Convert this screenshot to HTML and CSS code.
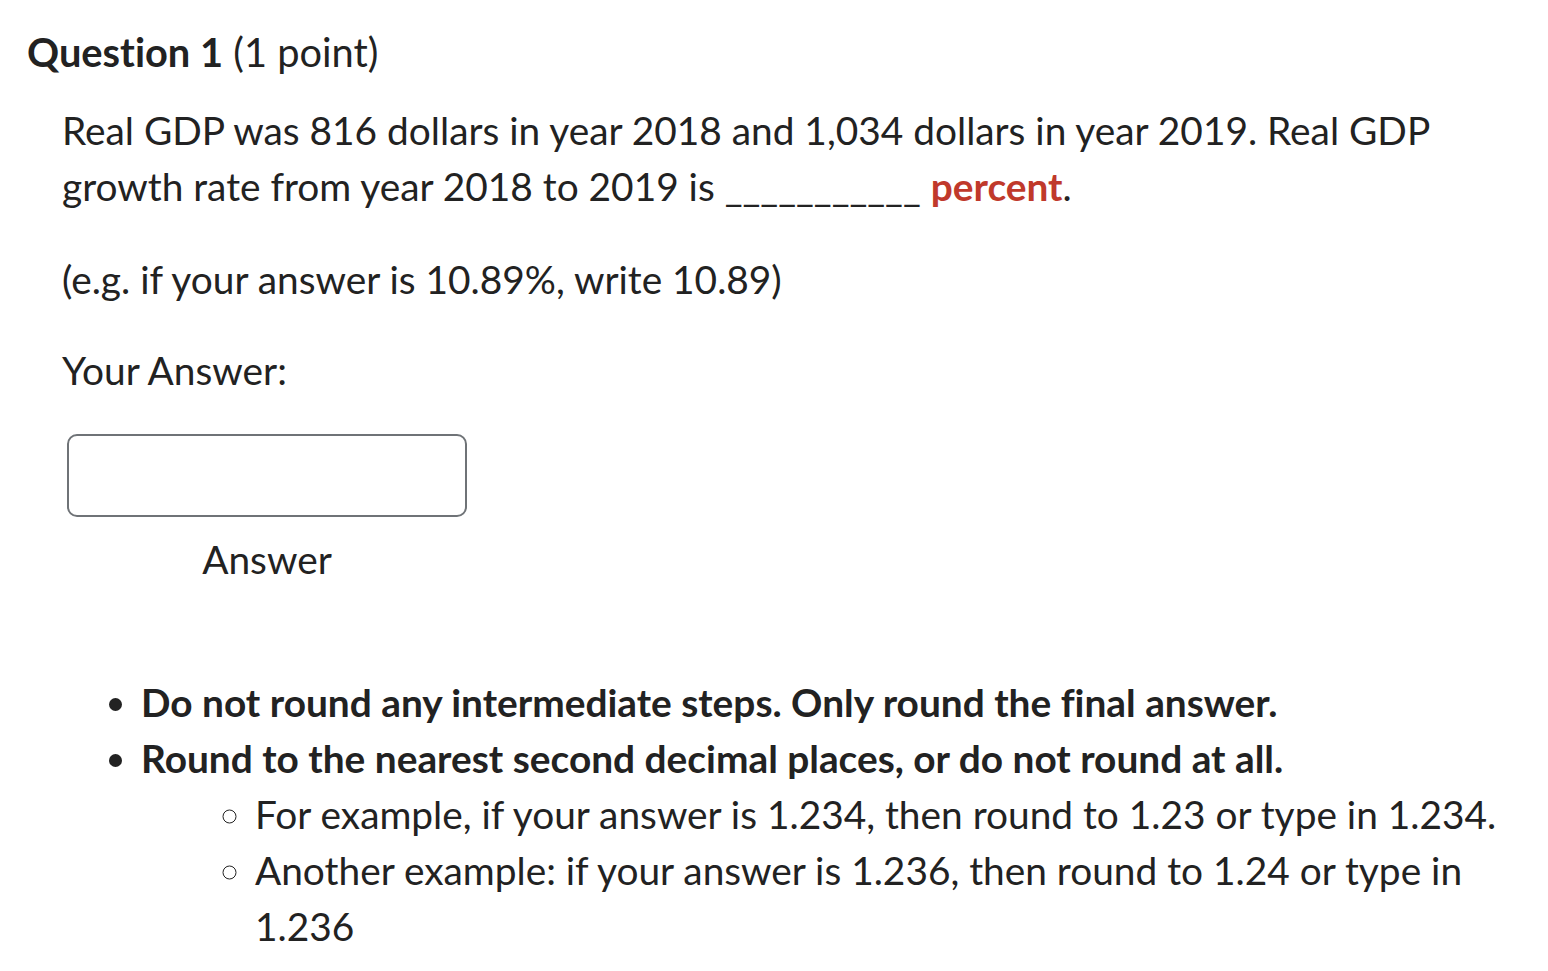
FILE: index.html
```html
<!DOCTYPE html>
<html>
<head>
<meta charset="utf-8">
<link rel="stylesheet" href="styles.css">
</head>
<body>
<div class="question">
  <h2 class="q-title"><span class="q-num">Question 1</span> (1 point)</h2>
  <div class="q-body">
    <p class="para para-first">Real GDP was 816 dollars in year 2018 and 1,034 dollars in year 2019. Real GDP growth rate from year 2018 to 2019 is ___________ <strong class="red">percent</strong>.</p>
    <p class="para">(e.g. if your answer is 10.89%, write 10.89)</p>
    <p class="para para-tight">Your Answer:</p>
    <div class="answer-block">
      <div class="input-box"></div>
      <div class="answer-label">Answer</div>
    </div>
    <ul class="rules">
      <li><strong>Do not round any intermediate steps. Only round the final answer.</strong></li>
      <li><strong>Round to the nearest second decimal places, or do not round at all.</strong>
        <ul class="sub">
          <li>For example, if your answer is 1.234, then round to 1.23 or type in 1.234.</li>
          <li>Another example: if your answer is 1.236, then round to 1.24 or type in 1.236</li>
        </ul>
      </li>
    </ul>
  </div>
</div>
</body>
</html>
```
FILE: styles.css
```css
body {
  margin: 0;
  background: #fff;
  color: #222;
  font-family: Lato, "Liberation Sans", sans-serif;
  font-size: 38.85px;
  line-height: 56px;
  font-variant-ligatures: none;
}
.question {
  padding: 24px 0 0 27px;
}
.q-title {
  margin: 0;
  font-size: 39.8px;
  font-weight: 400;
  line-height: 56px;
}
.q-num {
  font-weight: 700;
}
.q-body {
  padding-left: 35px;
  padding-top: 22px;
  width: 1455px;
}
.para {
  margin: 0 0 35px 0;
}
.para-first {
  margin-bottom: 37px;
}
.para-tight {
  margin-bottom: 36px;
}
.red {
  color: #c0392b;
  font-weight: 700;
}
.answer-block {
  width: 400px;
  margin-left: 5px;
}
.input-box {
  height: 79px;
  border: 2px solid #6f7377;
  border-radius: 10px;
}
.answer-label {
  text-align: center;
  margin-top: 14px;
}
.rules {
  margin: 87px 0 0 0;
  padding-left: 79px;
}
.rules li {
  margin: 0;
}
.sub {
  list-style-type: circle;
  padding-left: 114px;
  margin: 0;
}
```
